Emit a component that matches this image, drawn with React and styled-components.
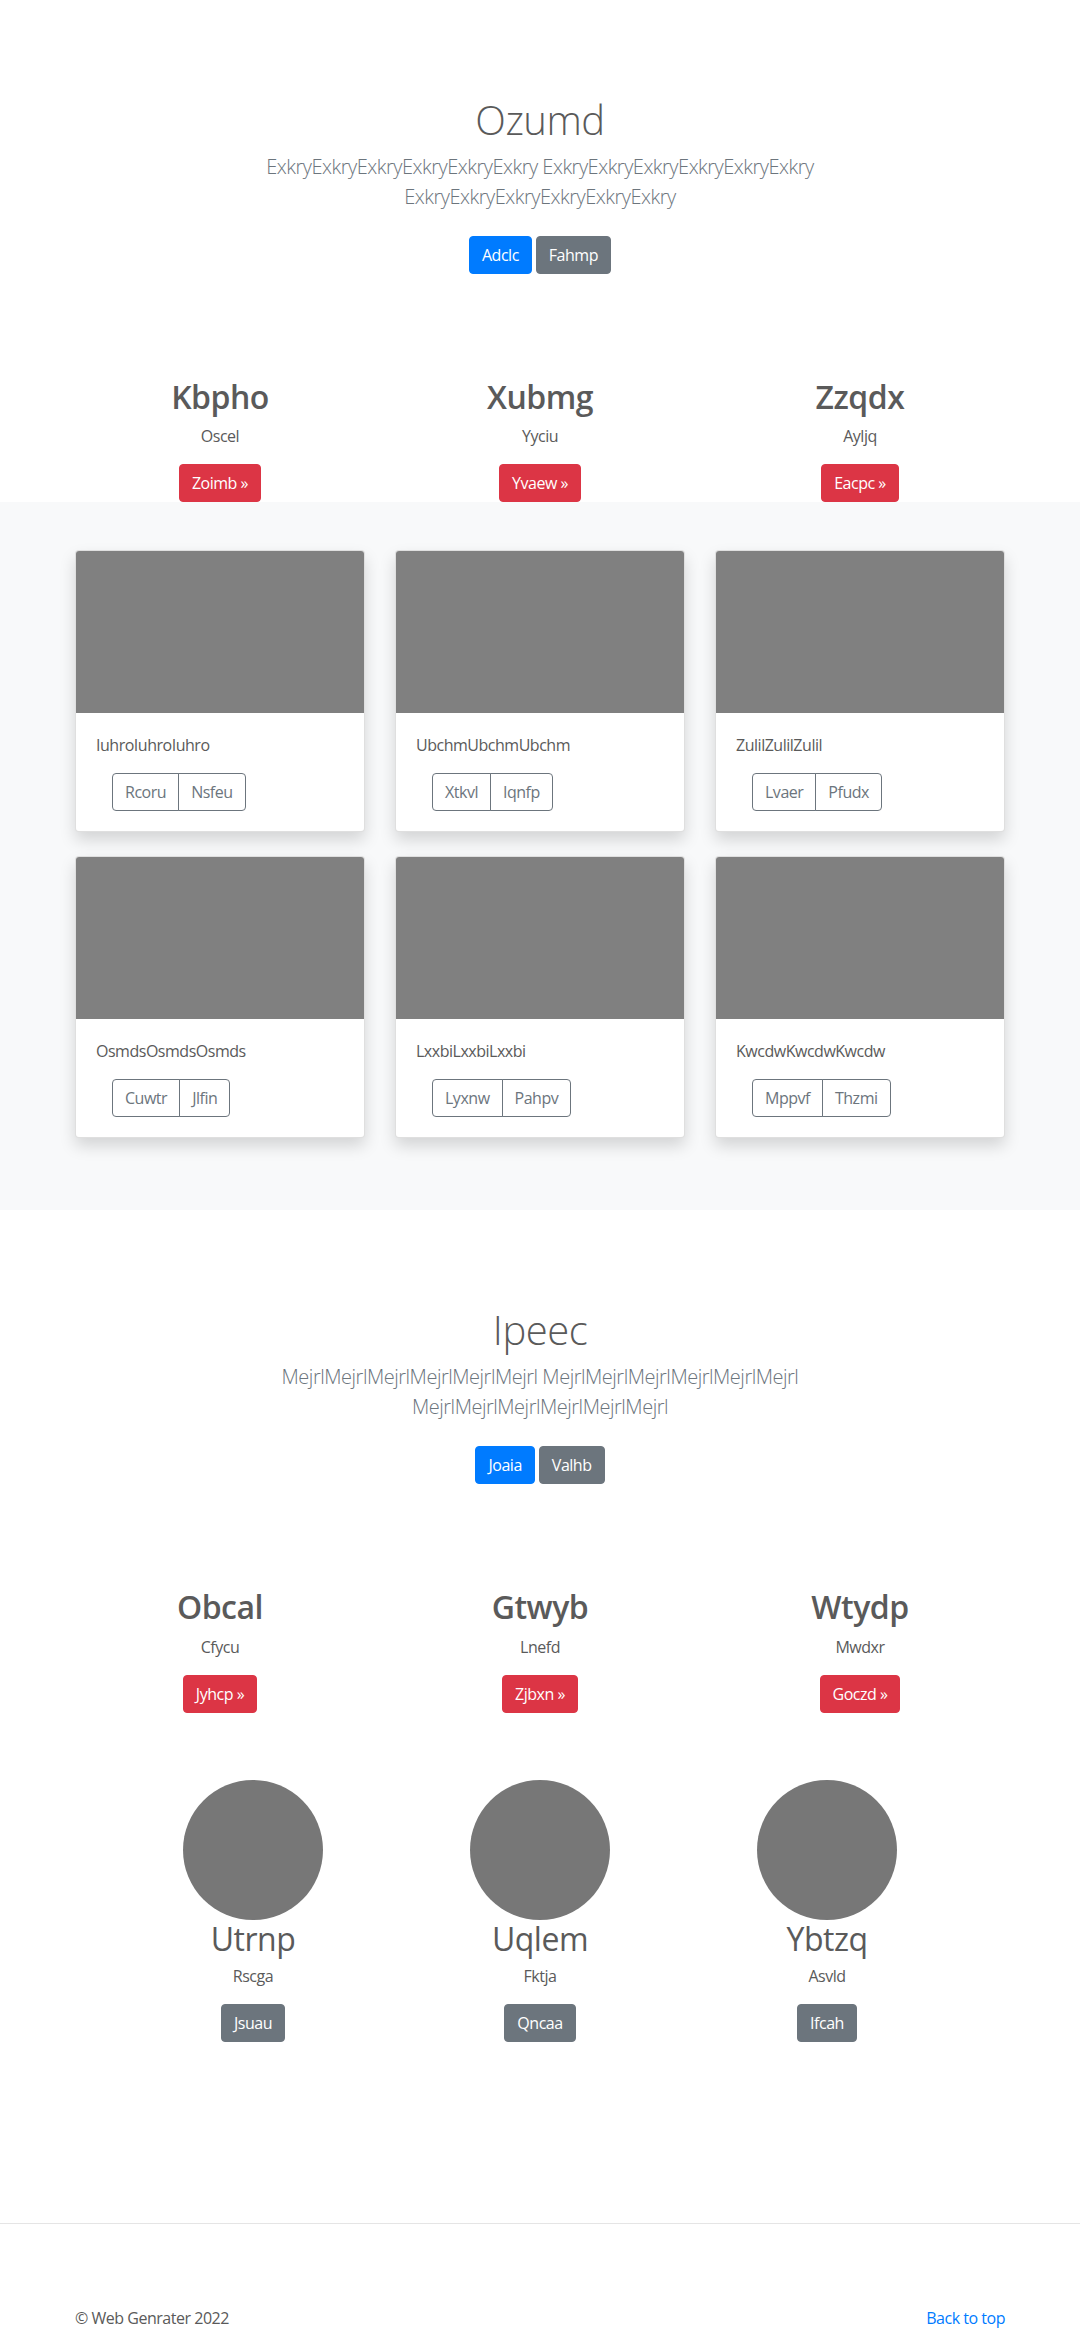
import React from 'react';
import styled, {createGlobalStyle} from "styled-components";

const GlobalStyle = createGlobalStyle`
  * {
    box-sizing: border-box;
  }

  body {
    margin: 0;
    font-family: "Open Sans", "Noto Sans", sans-serif;
    font-size: 16px;
    line-height: 1.5;
    letter-spacing: -0.03em;
    color: #5a5a5a;
    background: #fff;
  }
`

const heroes = [
    {
        title: 'Ozumd',
        lead: 'ExkryExkryExkryExkryExkryExkry ExkryExkryExkryExkryExkryExkry ExkryExkryExkryExkryExkryExkry',
        primary: 'Adclc',
        secondary: 'Fahmp',
        features: [
            {id: 1, title: 'Kbpho', text: 'Oscel', action: 'Zoimb'},
            {id: 2, title: 'Xubmg', text: 'Yyciu', action: 'Yvaew'},
            {id: 3, title: 'Zzqdx', text: 'Ayljq', action: 'Eacpc'},
        ]
    },
    {
        title: 'Ipeec',
        lead: 'MejrlMejrlMejrlMejrlMejrlMejrl MejrlMejrlMejrlMejrlMejrlMejrl MejrlMejrlMejrlMejrlMejrlMejrl',
        primary: 'Joaia',
        secondary: 'Valhb',
        features: [
            {id: 1, title: 'Obcal', text: 'Cfycu', action: 'Jyhcp'},
            {id: 2, title: 'Gtwyb', text: 'Lnefd', action: 'Zjbxn'},
            {id: 3, title: 'Wtydp', text: 'Mwdxr', action: 'Goczd'},
        ]
    }
]

const cards = [
    {id: 1, text: 'IuhroIuhroIuhro', left: 'Rcoru', right: 'Nsfeu'},
    {id: 2, text: 'UbchmUbchmUbchm', left: 'Xtkvl', right: 'Iqnfp'},
    {id: 3, text: 'ZulilZulilZulil', left: 'Lvaer', right: 'Pfudx'},
    {id: 4, text: 'OsmdsOsmdsOsmds', left: 'Cuwtr', right: 'Jlfin'},
    {id: 5, text: 'LxxbiLxxbiLxxbi', left: 'Lyxnw', right: 'Pahpv'},
    {id: 6, text: 'KwcdwKwcdwKwcdw', left: 'Mppvf', right: 'Thzmi'},
]

const people = [
    {id: 1, name: 'Utrnp', role: 'Rscga', action: 'Jsuau'},
    {id: 2, name: 'Uqlem', role: 'Fktja', action: 'Qncaa'},
    {id: 3, name: 'Ybtzq', role: 'Asvld', action: 'Ifcah'},
]

const Hero = ({title, lead, primary, secondary}) => (
    <HeroSection>
        <HeroInner>
            <HeroTitle>{title}</HeroTitle>
            <Lead>{lead}</Lead>
            <Actions>
                <Button variant="primary">{primary}</Button>
                <Button variant="secondary">{secondary}</Button>
            </Actions>
        </HeroInner>
    </HeroSection>
)

const Features = ({items}) => (
    <Container>
        <FeatureRow>
            {items.map(({id, title, text, action}) => (
                <Feature key={id}>
                    <FeatureTitle>{title}</FeatureTitle>
                    <Text>{text}</Text>
                    <Actions>
                        <Button variant="danger">{action} &raquo;</Button>
                    </Actions>
                </Feature>
            ))}
        </FeatureRow>
    </Container>
)

const App = () => {
    const [first, second] = heroes;

    return (
        <>
            <GlobalStyle/>
            <main>
                <Hero {...first}/>
                <Features items={first.features}/>

                <Album>
                    <Container>
                        <CardGrid>
                            {cards.map(({id, text, left, right}) => (
                                <Card key={id}>
                                    <CardImage/>
                                    <CardBody>
                                        <Text>{text}</Text>
                                        <ButtonGroup>
                                            <OutlineButton>{left}</OutlineButton>
                                            <OutlineButton>{right}</OutlineButton>
                                        </ButtonGroup>
                                    </CardBody>
                                </Card>
                            ))}
                        </CardGrid>
                    </Container>
                </Album>

                <Hero {...second}/>
                <Features items={second.features}/>

                <People>
                    {people.map(({id, name, role, action}) => (
                        <Person key={id}>
                            <Avatar/>
                            <PersonName>{name}</PersonName>
                            <Text>{role}</Text>
                            <Actions>
                                <Button variant="secondary">{action}</Button>
                            </Actions>
                        </Person>
                    ))}
                </People>
            </main>

            <Footer>
                <FooterInner>
                    <FooterText>&copy; Web Genrater 2022</FooterText>
                    <FooterLink href="#">Back to top</FooterLink>
                </FooterInner>
            </Footer>
        </>
    );
};

const colors = {
    primary: '#007bff',
    secondary: '#6c757d',
    danger: '#dc3545',
}

const Container = styled.div`
  width: 960px;
  margin: 0 auto;
`

const HeroSection = styled.section`
  padding: 96px 15px;
  text-align: center;
`

const HeroInner = styled.div`
  max-width: 610px;
  margin: 0 auto;
`

const HeroTitle = styled.h1`
  margin: 0 0 8px;
  font-size: 40px;
  font-weight: 300;
  line-height: 1.2;
`

const Lead = styled.p`
  margin: 0 0 16px;
  font-size: 20px;
  font-weight: 300;
  line-height: 1.5;
  color: #6c757d;
`

const Actions = styled.p`
  margin: 0;
  display: flex;
  justify-content: center;
  gap: 4px;
`

const Button = styled.a`
  display: inline-block;
  margin: 8px 0;
  padding: 6px 12px;
  border: 1px solid ${({variant}) => colors[variant]};
  border-radius: 4px;
  background: ${({variant}) => colors[variant]};
  color: #fff;
  font-size: 16px;
  line-height: 24px;
  text-decoration: none;
  white-space: nowrap;
`

const FeatureRow = styled.div`
  display: grid;
  grid-template-columns: repeat(3, 1fr);
`

const Feature = styled.div`
  padding: 0 15px;
  text-align: center;

  ${Button} {
    margin: 0;
  }
`

const FeatureTitle = styled.h2`
  margin: 0 0 8px;
  font-size: 32px;
  font-weight: 600;
  line-height: 1.2;
`

const Text = styled.p`
  margin: 0 0 16px;
`

const Album = styled.section`
  background: #f8f9fa;
  padding: 48px 0;
`

const CardGrid = styled.div`
  display: grid;
  grid-template-columns: repeat(3, 290px);
  gap: 24px 30px;
  padding: 0 15px 24px;
`

const Card = styled.div`
  background: #fff;
  border: 1px solid rgba(0, 0, 0, .125);
  border-radius: 4px;
  box-shadow: 0 8px 16px rgba(0, 0, 0, .15);
  overflow: hidden;
`

const CardImage = styled.div`
  height: 162px;
  background: #808080;
`

const CardBody = styled.div`
  padding: 20px;
`

const ButtonGroup = styled.div`
  display: inline-flex;
  margin-left: 16px;
`

const OutlineButton = styled.a`
  padding: 6px 12px;
  border: 1px solid #6c757d;
  color: #6c757d;
  font-size: 16px;
  line-height: 24px;
  text-decoration: none;

  &:first-child {
    border-radius: 4px 0 0 4px;
  }

  & + & {
    margin-left: -1px;
    border-radius: 0 4px 4px 0;
  }
`

const People = styled.section`
  width: 861px;
  margin: 67px auto 0;
  padding-bottom: 141px;
  display: grid;
  grid-template-columns: repeat(3, 1fr);
`

const Person = styled.div`
  display: flex;
  flex-direction: column;
  align-items: center;
  text-align: center;
  margin-bottom: 24px;

  ${Button} {
    margin: 0;
  }

  ${Actions} {
    margin-bottom: 16px;
  }
`

const Avatar = styled.div`
  width: 140px;
  height: 140px;
  border-radius: 50%;
  background: #777;
`

const PersonName = styled.h2`
  margin: 0 0 6px;
  font-size: 32px;
  font-weight: 400;
  line-height: 1.2;
`

const Footer = styled.footer`
  border-top: 1px solid #e5e5e5;
  padding: 82px 0 48px;
`

const FooterInner = styled.div`
  width: 960px;
  margin: 0 auto;
  padding: 0 15px;
  display: flex;
  justify-content: space-between;
`

const FooterText = styled.p`
  margin: 0;
`

const FooterLink = styled.a`
  color: #007bff;
  text-decoration: none;
`

export default App;
